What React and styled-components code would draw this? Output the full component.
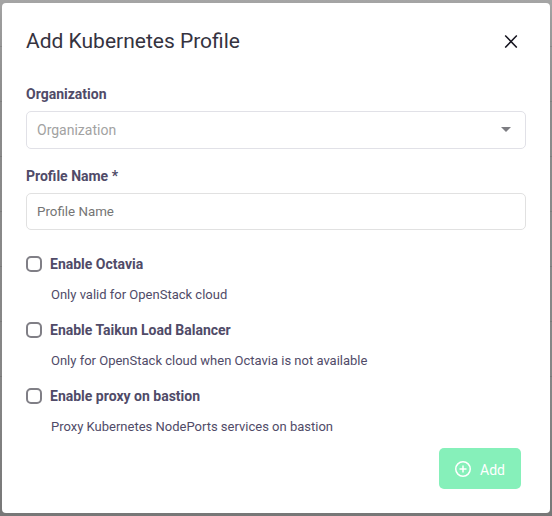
import React from "react";
import styled, { createGlobalStyle } from "styled-components";

const GlobalStyle = createGlobalStyle`
  * { box-sizing: border-box; }
  html, body, #root { height: 100%; margin: 0; }
  body { overflow: hidden; font-family: Roboto, "Liberation Sans", sans-serif; color: #504b68; }
`;

const Backdrop = styled.div`
  height: 516px;
  width: 552px;
  padding: 3px 2px;
  background:
    repeating-linear-gradient(transparent 0 54px, rgba(0, 0, 0, 0.1) 54px 55px) 0 -8px / 100% 385px no-repeat,
    linear-gradient(#a5a5a5 0, #9c9c9c 20px, #8b8b8b 110px, #858585 400px, #777 516px);
`;

const Dialog = styled.form`
  display: flex;
  flex-direction: column;
  height: 510px;
  padding: 24px;
  border-radius: 4px;
  background: #fff;
`;

const Header = styled.header`
  display: flex;
  align-items: center;
  justify-content: space-between;
  height: 28px;
`;

const Title = styled.h1`
  margin: 0;
  font-size: 21px;
  line-height: 28px;
  font-weight: 400;
  color: #35333f;
`;

const CloseButton = styled.button`
  display: flex;
  padding: 0;
  margin-right: 8px;
  border: 0;
  background: none;
`;

const Field = styled.div`
  display: flex;
  flex-direction: column;
  margin-top: ${(p) => p.$gap}px;
`;

const Label = styled.label`
  font-size: 14px;
  line-height: 16px;
  font-weight: 700;
`;

const SelectBox = styled.div`
  display: flex;
  align-items: center;
  justify-content: space-between;
  height: 38px;
  margin-top: 9px;
  padding: 0 14px 0 10px;
  border: 1px solid #e1e1e7;
  border-radius: 5px;
  font-size: 14px;
  color: #a2a2a2;
  svg { margin-bottom: 1px; }
`;

const Input = styled.input`
  height: 37px;
  margin-top: 9px;
  padding: 0 10px;
  border: 1px solid #e1e1e1;
  border-radius: 5px;
  font: 400 13.333px Roboto, sans-serif;
  outline: 0;
  &::placeholder { color: #757575; }
`;

const Options = styled.div`
  display: flex;
  flex-direction: column;
  gap: 20px;
  margin-top: 26px;
`;

const Option = styled.div`
  height: 46px;
`;

const OptionLabel = styled.label`
  display: flex;
  align-items: center;
  gap: 8px;
  font-size: 14px;
  line-height: 16px;
  font-weight: 700;
`;

const Checkbox = styled.input`
  appearance: none;
  width: 16px;
  height: 16px;
  margin: 0;
  border: 2px solid #807f86;
  border-radius: 5px;
`;

const Hint = styled.p`
  margin: 15px 0 0 25px;
  font-size: 13px;
  line-height: 16px;
`;

const Footer = styled.footer`
  display: flex;
  justify-content: flex-end;
  margin: 14px 5px 0 0;
`;

const AddButton = styled.button`
  display: flex;
  align-items: center;
  gap: 9px;
  width: 82px;
  height: 41px;
  padding: 2px 0 0 16px;
  border: 0;
  border-radius: 5px;
  background: #86f0ba;
  color: #fff;
  font: 400 14px Roboto, sans-serif;
  svg { margin-top: -1px; }
`;

const options = [
  ["Enable Octavia", "Only valid for OpenStack cloud"],
  ["Enable Taikun Load Balancer", "Only for OpenStack cloud when Octavia is not available"],
  ["Enable proxy on bastion", "Proxy Kubernetes NodePorts services on bastion"],
];

export default function App() {
  return (
    <Backdrop>
      <GlobalStyle />
      <Dialog>
        <Header>
          <Title>Add Kubernetes Profile</Title>
          <CloseButton type="button" aria-label="Close">
            <svg width="14" height="14" viewBox="0 0 14 14" fill="none" stroke="#15141f" strokeWidth="1.5">
              <path d="M1.2 1.4l11.6 12.2M12.8 1.4L1.2 13.6" />
            </svg>
          </CloseButton>
        </Header>
        <Field $gap={31}>
          <Label>Organization</Label>
          <SelectBox>
            Organization
            <svg width="10" height="5" viewBox="0 0 10 5" fill="#7d7d82">
              <path d="M0 0h10L5 5z" />
            </svg>
          </SelectBox>
        </Field>
        <Field $gap={19}>
          <Label htmlFor="name">Profile Name *</Label>
          <Input id="name" placeholder="Profile Name" />
        </Field>
        <Options>
          {options.map(([label, hint]) => (
            <Option key={label}>
              <OptionLabel><Checkbox type="checkbox" />{label}</OptionLabel>
              <Hint>{hint}</Hint>
            </Option>
          ))}
        </Options>
        <Footer>
          <AddButton type="button">
            <svg width="16" height="16" viewBox="0 0 16 16" fill="none" stroke="#fff" strokeWidth="1.5">
              <circle cx="8" cy="8" r="7.25" />
              <path d="M8 4.5v7M4.5 8h7" />
            </svg>
            Add
          </AddButton>
        </Footer>
      </Dialog>
    </Backdrop>
  );
}
